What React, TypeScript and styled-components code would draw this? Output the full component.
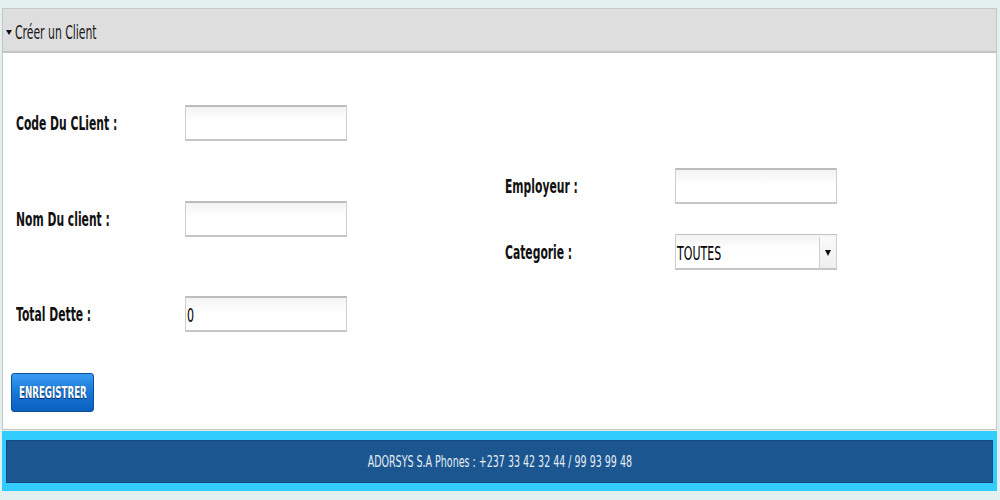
import React from "react";
import styled, { createGlobalStyle } from "styled-components";

const Global = createGlobalStyle`
  html, body { margin: 0; padding: 0; background: #e4f0f0; }
  body { font-family: "DejaVu Sans", Verdana, sans-serif; }
  * { box-sizing: border-box; }
`;

const Page = styled.div`
  width: 1000px;
  height: 500px;
  padding: 8px 3px 0 2px;
  display: flex;
  flex-direction: column;
  overflow: hidden;
`;

const Panel = styled.section`
  border: 1px solid #c4c4c4;
  border-top-color: #c8c8c8;
  background: #fff;
  display: flex;
  flex-direction: column;
`;

const Header = styled.div`
  height: 44px;
  background: #dedede;
  border-bottom: 2px solid #c4c4c4;
  display: flex;
  align-items: center;
  padding-left: 3px;
  padding-top: 4px;
  color: #1a1a1a;
`;

const Squeeze = styled.span<{ $size: number; $bold?: boolean; $origin?: string }>`
  display: inline-block;
  white-space: nowrap;
  font-size: ${(p) => p.$size}px;
  font-weight: ${(p) => (p.$bold ? 700 : 400)};
  transform: scaleX(0.58);
  transform-origin: ${(p) => p.$origin || "left"} center;
`;

const Caret = styled.span`
  width: 0;
  height: 0;
  border-left: 3px solid transparent;
  border-right: 3px solid transparent;
  border-top: 5px solid #111;
  margin-right: 3px;
  margin-top: 1px;
`;

const Body = styled.div`
  height: 376px;
  display: flex;
  flex-direction: column;
`;

const Columns = styled.div`
  display: flex;
`;

const Column = styled.div<{ $top: number; $left: number; $width: number }>`
  width: ${(p) => p.$width}px;
  padding-top: ${(p) => p.$top}px;
  padding-left: ${(p) => p.$left}px;
  display: flex;
  flex-direction: column;
`;

const Field = styled.div<{ $mt?: number }>`
  display: flex;
  align-items: center;
  height: 36px;
  margin-top: ${(p) => p.$mt || 0}px;
`;

const Label = styled.label<{ $w: number }>`
  width: ${(p) => p.$w}px;
  color: #111;
  display: flex;
  align-items: center;
`;

const Input = styled.div`
  width: 162px;
  height: 36px;
  border: 1px solid #cfcfcf;
  border-top: 2px solid #bdbdbd;
  border-bottom: 2px solid #c6c6c6;
  background: linear-gradient(#f3f3f3, #ffffff 45%);
  display: flex;
  align-items: center;
  padding: 2px 0 0 1px;
  color: #000;
`;

const Select = styled(Input)`
  padding: 2px 0 0 0;
  border-top: 1px solid #c4c4c4;
`;

const SelectValue = styled.div`
  flex: 1;
  padding-left: 1px;
`;

const ArrowBox = styled.div`
  width: 17px;
  height: 100%;
  border-left: 1px solid #cfcfcf;
  display: flex;
  align-items: center;
  justify-content: center;
  background: linear-gradient(#fafafa, #efefef);
`;

const Arrow = styled.span`
  width: 0;
  height: 0;
  border-left: 3px solid transparent;
  border-right: 3px solid transparent;
  border-top: 6px solid #111;
`;

const Button = styled.button`
  margin: 41px 0 0 8px;
  width: 83px;
  height: 39px;
  border: 1px solid #0b4f9a;
  border-radius: 3px;
  background: linear-gradient(#3a9cf0, #1678d8 50%, #0b5fbf);
  color: #fff;
  text-shadow: 0 1px 1px #0a2a55;
  padding: 0 0 0 7px;
  display: flex;
  align-items: center;
  cursor: pointer;
  font-family: "DejaVu Sans", sans-serif;
`;

const Footer = styled.footer`
  margin-top: 1px;
  height: 60px;
  background: #33ccff;
  padding: 9px 4px 8px 4px;
  display: flex;
`;

const FooterBar = styled.div`
  flex: 1;
  background: #1b5690;
  border: 1px solid #154a80;
  display: flex;
  align-items: center;
  justify-content: center;
  color: #e6eef6;
`;

export default function App() {
  return (
    <>
      <Global />
      <Page>
        <Panel>
          <Header>
            <Caret />
            <Squeeze $size={18.7}>Créer un Client</Squeeze>
          </Header>
          <Body>
            <Columns>
              <Column $top={52} $left={13} $width={502}>
                <Field>
                  <Label $w={169}><Squeeze $size={18.6} $bold>Code Du CLient :</Squeeze></Label>
                  <Input />
                </Field>
                <Field $mt={60}>
                  <Label $w={169}><Squeeze $size={18.6} $bold>Nom Du client :</Squeeze></Label>
                  <Input />
                </Field>
                <Field $mt={59}>
                  <Label $w={169}><Squeeze $size={18.6} $bold>Total Dette :</Squeeze></Label>
                  <Input><Squeeze $size={19}>0</Squeeze></Input>
                </Field>
              </Column>
              <Column $top={115} $left={0} $width={340}>
                <Field>
                  <Label $w={170}><Squeeze $size={18.6} $bold>Employeur :</Squeeze></Label>
                  <Input />
                </Field>
                <Field $mt={30}>
                  <Label $w={170}><Squeeze $size={18.6} $bold>Categorie :</Squeeze></Label>
                  <Select>
                    <SelectValue><Squeeze $size={19}>TOUTES</Squeeze></SelectValue>
                    <ArrowBox><Arrow /></ArrowBox>
                  </Select>
                </Field>
              </Column>
            </Columns>
            <Button type="button">
              <Squeeze $size={15} $bold>ENREGISTRER</Squeeze>
            </Button>
          </Body>
        </Panel>
        <Footer>
          <FooterBar>
            <Squeeze $size={16.4} $origin="center">ADORSYS S.A Phones : +237 33 42 32 44 / 99 93 99 48</Squeeze>
          </FooterBar>
        </Footer>
      </Page>
    </>
  );
}
